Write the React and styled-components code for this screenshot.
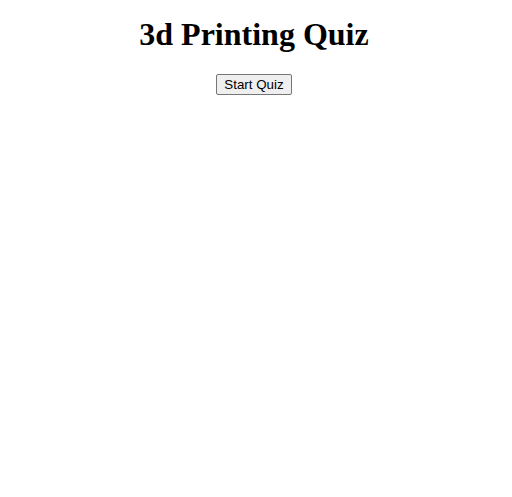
import React from 'react';
import styled, { createGlobalStyle } from 'styled-components';

const GlobalStyle = createGlobalStyle`
  body {
    margin: 8px;
    background: #ffffff;
    font-family: "Liberation Serif", "Times New Roman", serif;
    color: #000000;
  }
`;

const Page = styled.div`
  text-align: center;
  padding-right: 4px;
`;

const Title = styled.h1`
  font-family: "Liberation Serif", "Times New Roman", serif;
  font-size: 32px;
  font-weight: bold;
  margin: 8px 0 21.44px;
`;

const StartButton = styled.button`
  font-family: "Liberation Sans", Arial, sans-serif;
  font-size: 13.333px;
  color: #000000;
  background-color: #efefef;
  border: 1px solid #767676;
  border-radius: 2px;
  padding: 2px 7px;
  cursor: pointer;
  :hover {
    background-color: #e5e5e5;
  }
`;

export default function App() {
  return (
    <>
      <GlobalStyle />
      <Page>
        <Title>3d Printing Quiz</Title>
        <StartButton>Start Quiz</StartButton>
      </Page>
    </>
  );
}
